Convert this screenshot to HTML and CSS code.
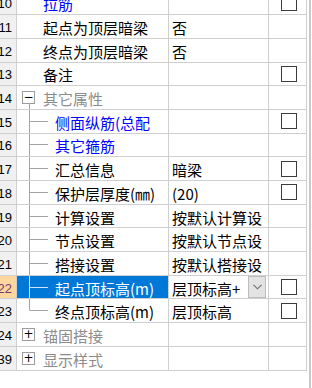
FILE: index.html
```html
<!DOCTYPE html>
<html lang="zh-CN">
<head>
    <meta charset="UTF-8">
    <title>属性列表</title>
    <link rel="stylesheet" href="styles.css">
</head>
<body>
<div class="frame">
    <div class="grid">
        <div class="row">
            <div class="num">10</div>
            <div class="tree top link">拉筋</div>
            <div class="val"></div>
            <div class="chk"><span class="box"></span></div>
        </div>
        <div class="row">
            <div class="num">11</div>
            <div class="tree top">起点为顶层暗梁</div>
            <div class="val">否</div>
            <div class="chk"></div>
        </div>
        <div class="row">
            <div class="num">12</div>
            <div class="tree top">终点为顶层暗梁</div>
            <div class="val">否</div>
            <div class="chk"></div>
        </div>
        <div class="row">
            <div class="num">13</div>
            <div class="tree top">备注</div>
            <div class="val"></div>
            <div class="chk"><span class="box"></span></div>
        </div>
        <div class="row">
            <div class="num">14</div>
            <div class="tree group open"><span class="toggle">−</span>其它属性</div>
            <div class="val"></div>
            <div class="chk"></div>
        </div>
        <div class="row">
            <div class="num">15</div>
            <div class="tree child link">侧面纵筋(总配</div>
            <div class="val"></div>
            <div class="chk"><span class="box"></span></div>
        </div>
        <div class="row">
            <div class="num">16</div>
            <div class="tree child link">其它箍筋</div>
            <div class="val"></div>
            <div class="chk"></div>
        </div>
        <div class="row">
            <div class="num">17</div>
            <div class="tree child">汇总信息</div>
            <div class="val">暗梁</div>
            <div class="chk"><span class="box"></span></div>
        </div>
        <div class="row">
            <div class="num">18</div>
            <div class="tree child">保护层厚度(㎜)</div>
            <div class="val">(20)</div>
            <div class="chk"><span class="box"></span></div>
        </div>
        <div class="row">
            <div class="num">19</div>
            <div class="tree child">计算设置</div>
            <div class="val">按默认计算设</div>
            <div class="chk"></div>
        </div>
        <div class="row">
            <div class="num">20</div>
            <div class="tree child">节点设置</div>
            <div class="val">按默认节点设</div>
            <div class="chk"></div>
        </div>
        <div class="row">
            <div class="num">21</div>
            <div class="tree child">搭接设置</div>
            <div class="val">按默认搭接设</div>
            <div class="chk"></div>
        </div>
        <div class="row selected">
            <div class="num">22</div>
            <div class="tree child">起点顶标高(m)</div>
            <div class="val">
                <span class="val-text">层顶标高+</span>
                <span class="drop">
                    <svg width="9" height="6" viewBox="0 0 9 6"><path d="M0.5 0.8 L4.5 4.8 L8.5 0.8" fill="none" stroke="#6e6e6e" stroke-width="1.1"/></svg>
                </span>
            </div>
            <div class="chk"><span class="box"></span></div>
        </div>
        <div class="row">
            <div class="num">23</div>
            <div class="tree child last">终点顶标高(m)</div>
            <div class="val">层顶标高</div>
            <div class="chk"><span class="box"></span></div>
        </div>
        <div class="row">
            <div class="num">24</div>
            <div class="tree group"><span class="toggle">+</span>锚固搭接</div>
            <div class="val"></div>
            <div class="chk"></div>
        </div>
        <div class="row">
            <div class="num">39</div>
            <div class="tree group"><span class="toggle">+</span>显示样式</div>
            <div class="val"></div>
            <div class="chk"></div>
        </div>
    </div>
</div>
</body>
</html>
```

FILE: styles.css
```css
body {
    margin: 0;
    background: #fff;
    color: #000;
    font-family: "Noto Sans CJK SC", "Noto Sans", sans-serif;
    font-size: 15px;
}

.frame {
    width: 309px;
    height: 388px;
    border-right: 2px solid #c9c9c9;
    overflow: hidden;
}

.grid {
    width: 320px;
    margin: -8.5px 0 0 -13px;
}

.row {
    display: flex;
    height: 23.7px;
}

.row > div {
    box-sizing: border-box;
    height: 100%;
    border-right: 1px solid #cfcfcf;
    border-bottom: 1px solid #cfcfcf;
    display: flex;
    align-items: center;
    white-space: nowrap;
    overflow: hidden;
}

.num {
    width: 30px;
    flex: none;
    justify-content: flex-end;
    padding: 2px 4px 0 0;
    background: #f0f0f0;
    font-family: "Liberation Sans", sans-serif;
    font-size: 13px;
}

.tree {
    width: 152px;
    flex: none;
    padding-top: 2px;
    line-height: 1;
}

.tree.top {
    padding-left: 26px;
}

.tree.link {
    color: #0000ff;
}

.tree.child {
    padding-left: 38px;
    background:
        linear-gradient(#a3a3a3, #a3a3a3) 12px 0 / 1px 100% no-repeat,
        linear-gradient(#a3a3a3, #a3a3a3) 13px 50% / 18px 1px no-repeat;
}

.tree.child.last {
    background:
        linear-gradient(#a3a3a3, #a3a3a3) 12px 0 / 1px 50% no-repeat,
        linear-gradient(#a3a3a3, #a3a3a3) 13px 50% / 18px 1px no-repeat;
}

.tree.group {
    padding-left: 5px;
    color: #8c8c8c;
}

.tree.group.open {
    background: linear-gradient(#a3a3a3, #a3a3a3) 12px 100% / 1px 30% no-repeat;
}

.toggle {
    box-sizing: border-box;
    width: 13px;
    height: 13px;
    margin: -2px 8px 0 0;
    border: 1px solid #9c9c9c;
    background: #fff;
    color: #000;
    font-family: "DejaVu Sans", sans-serif;
    font-size: 12px;
    line-height: 11px;
    text-align: center;
}

.val {
    width: 100px;
    flex: none;
    padding: 2px 0 0 3px;
    line-height: 1;
}

.chk {
    width: 38px;
    flex: none;
    justify-content: center;
    padding-left: 2px;
}

.box {
    box-sizing: border-box;
    width: 16px;
    height: 16px;
    border: 1px solid #3c3c3c;
    background: #fff;
}

.selected .num {
    background: #ffd79e;
    color: #7c3b6e;
}

.selected .tree {
    background:
        linear-gradient(#d4e4f7, #d4e4f7) 12px 0 / 1px 100% no-repeat,
        linear-gradient(#d4e4f7, #d4e4f7) 13px 50% / 18px 1px no-repeat,
        #0078d7;
    color: #fff;
}

.selected .val {
    padding-top: 0;
}

.val-text {
    flex: 1;
    padding-top: 2px;
}

.drop {
    box-sizing: border-box;
    width: 18px;
    height: 100%;
    margin-right: 2px;
    display: flex;
    align-items: center;
    justify-content: center;
    background: #e3e3e3;
    border: 1px solid #bcbcbc;
}
```
